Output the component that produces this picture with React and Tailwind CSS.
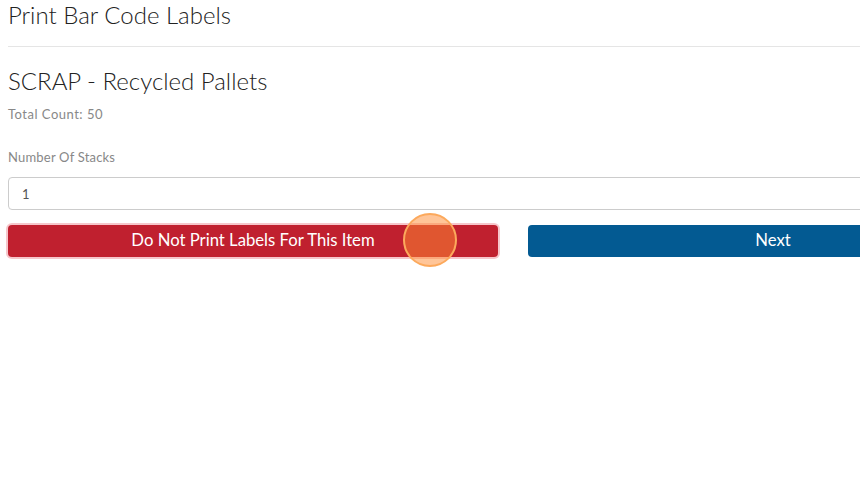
import { useState } from 'react';

export default function App() {
  const [stacks, setStacks] = useState('1');

  return (
    <div className="h-screen w-full overflow-hidden bg-white font-['Lato','Liberation_Sans',sans-serif] text-[#333]">
      <div className="w-[1026px] px-2">
        {/* Page header */}
        <h1 className="text-[24px] leading-[29px] font-light text-[#222]">Print Bar Code Labels</h1>
        <hr className="mt-[17px] border-t border-[#e5e5e5]" />

        {/* Item */}
        <h2 className="mt-[18px] text-[24px] leading-[32px] font-light text-[#222]">SCRAP - Recycled Pallets</h2>
        <p className="mt-[9px] text-[13px] leading-[16px] tracking-[0.5px] text-[#888]">Total Count: 50</p>

        <label className="mt-[27px] block text-[13px] leading-[16px] tracking-[0.2px] text-[#888]">Number Of Stacks</label>
        <input
          value={stacks}
          onChange={(e) => setStacks(e.target.value)}
          className="mt-[12px] block h-[33px] w-full rounded-[4px] border border-[#ccc] px-[13px] text-[13px] text-[#555] outline-none"
        />

        {/* Actions */}
        <div className="mt-[15px] grid grid-cols-2 gap-[30px]">
          <div className="relative">
            <button className="h-[32px] w-full rounded-[4px] bg-[#c0202f] text-[16.7px] text-white ring-2 ring-[#f6c6cb]">
              Do Not Print Labels For This Item
            </button>
            {/* click marker */}
            <span className="pointer-events-none absolute left-[395px] top-[-12px] h-[54px] w-[54px] rounded-full border-2 border-[#fca95c] bg-[#ff8c32]/50" />
          </div>
          <button className="h-[32px] w-full rounded-[4px] bg-[#035a92] text-[16.7px] text-white">Next</button>
        </div>
      </div>
    </div>
  );
}
